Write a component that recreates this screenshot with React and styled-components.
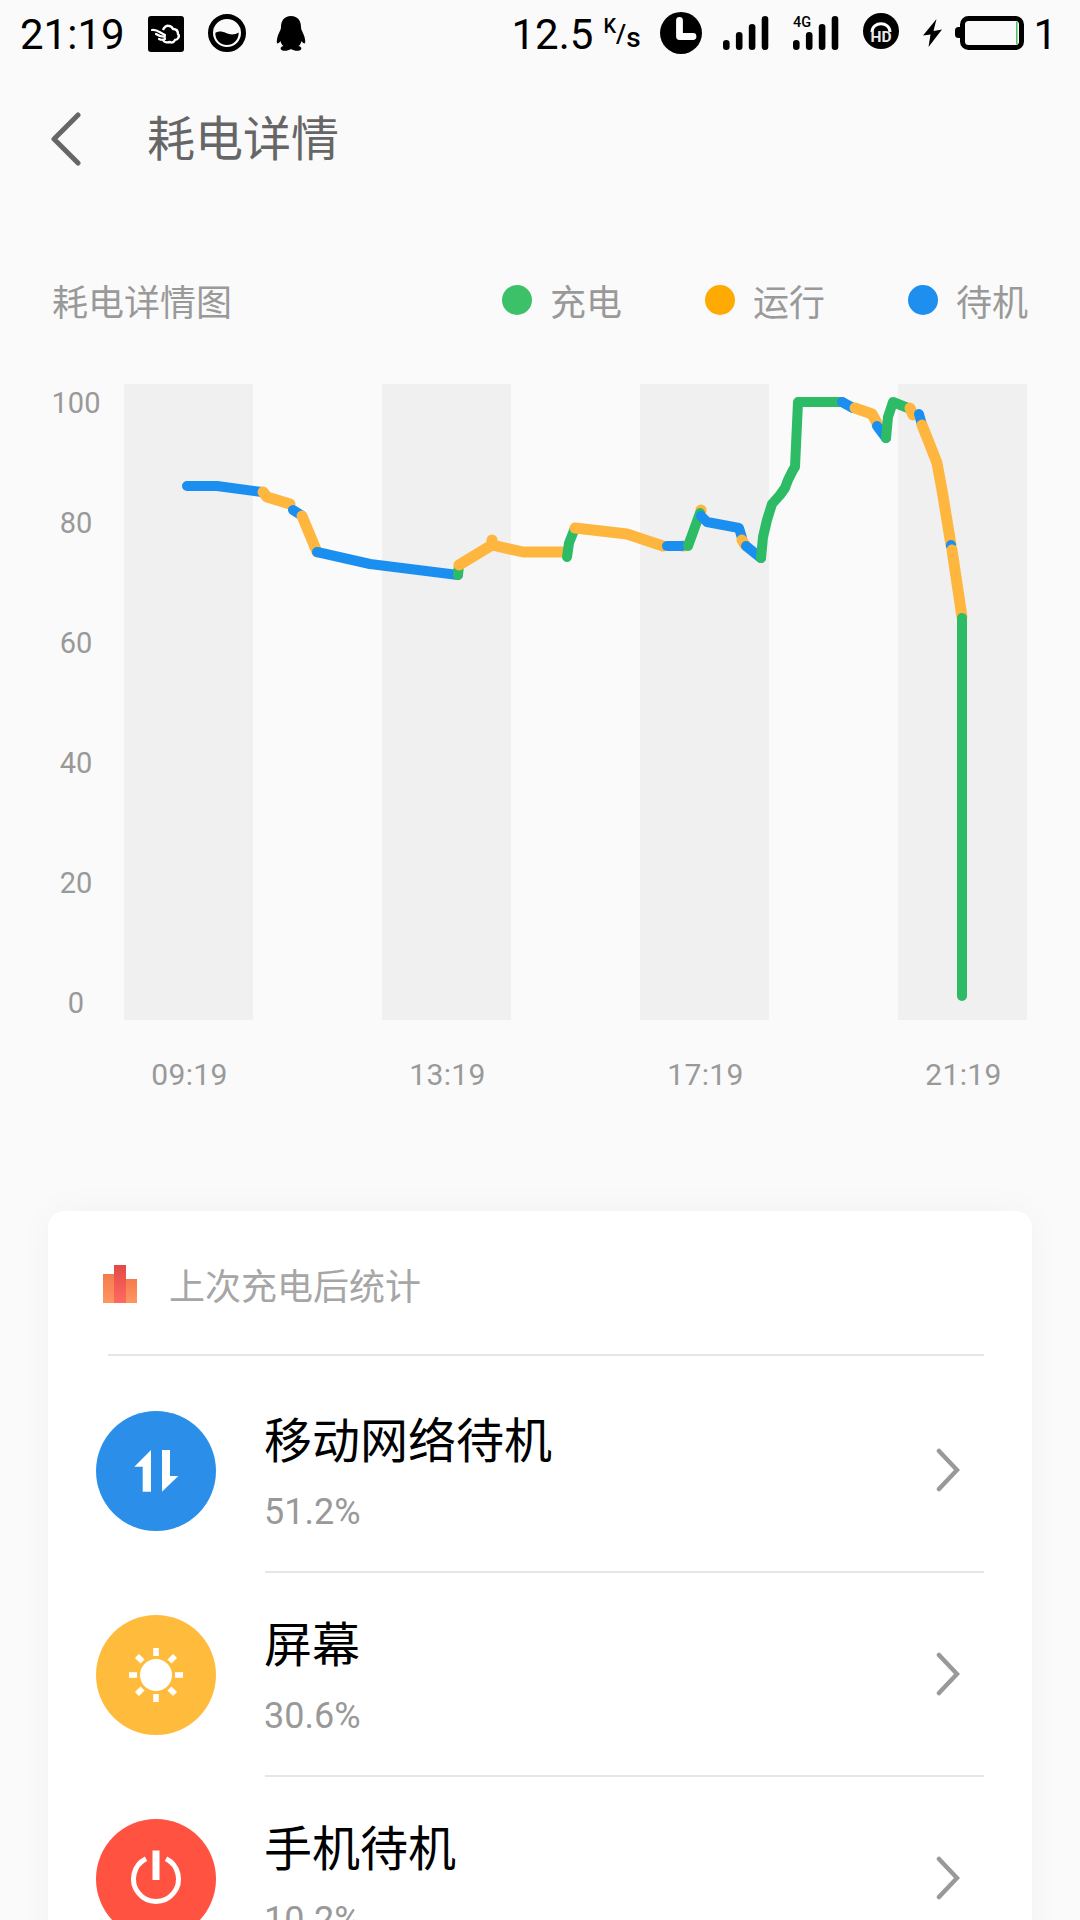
import React from "react";
import styled, { createGlobalStyle } from "styled-components";

const GlobalStyle = createGlobalStyle`
  html, body {
    margin: 0;
    background: #fafafa;
  }
  body {
    font-family: Roboto, "Noto Sans CJK SC", sans-serif;
  }
`;

const Page = styled.div`
  width: 1080px;
  height: 1920px;
  overflow: hidden;
  background: #fafafa;
`;

/* status bar */
const StatusBar = styled.div`
  height: 66px;
  display: flex;
  align-items: center;
  padding: 0 23px 0 20px;
  color: #000;
  box-sizing: border-box;
`;

const StatusText = styled.span`
  font-size: 42px;
  line-height: 60px;
  margin-top: 3px;
  margin-left: ${(p) => p.$gap || 0}px;
`;

const StatusIcon = styled.svg`
  display: block;
  flex: none;
  overflow: visible;
  margin-left: ${(p) => p.$gap || 0}px;
  margin-bottom: ${(p) => p.$lift || 0}px;
`;

const Spacer = styled.div`
  flex: 1;
`;

const SpeedUnit = styled.div`
  display: flex;
  height: 36px;
  width: 39px;
  margin: 2px 0 0 10px;
`;

const UnitPart = styled.span`
  align-self: ${(p) => p.$align};
  font-weight: ${(p) => p.$weight};
  font-size: ${(p) => p.$size}px;
  line-height: ${(p) => p.$size}px;
`;

/* nav */
const NavBar = styled.div`
  height: 142px;
  margin-top: 2px;
  display: flex;
  align-items: center;
  padding-left: 51px;
`;

const NavTitle = styled.h1`
  margin: 0 0 8px 66px;
  font-size: 48px;
  font-weight: 400;
  color: #666;
`;

/* chart */
const ChartHeader = styled.div`
  display: flex;
  align-items: center;
  height: 60px;
  margin: 60px 52px 52px;
  font-size: 36px;
  color: #999;
`;

const ChartTitle = styled.div`
  flex: 1;
`;

const LegendItem = styled.div`
  display: flex;
  align-items: center;
  gap: 18px;
  margin-left: 83px;
`;

const LegendDot = styled.i`
  width: 30px;
  height: 30px;
  border-radius: 50%;
  background: ${(p) => p.$color};
`;

const ChartRow = styled.div`
  display: flex;
  padding-left: 36px;
`;

const YAxis = styled.div`
  width: 80px;
  height: 640px;
  margin: 1px 8px 0 0;
  display: flex;
  flex-direction: column;
  justify-content: space-between;
  align-items: center;
`;

const AxisLabel = styled.span`
  font-size: 29px;
  line-height: 40px;
  color: #999;
  text-align: center;
`;

const TimeLabel = styled(AxisLabel)`
  font-size: 30px;
  letter-spacing: 0.4px;
`;

const Plot = styled.svg`
  display: block;
  margin-top: 2px;
`;

const XAxis = styled.div`
  display: grid;
  grid-template-columns: repeat(4, 129px);
  column-gap: 129px;
  margin: 32px 0 116px 125px;
`;

/* card */
const Card = styled.section`
  margin: 0 48px;
  height: 800px;
  background: #fff;
  border-radius: 16px;
  box-shadow: 0 0 36px rgba(0, 0, 0, 0.035);
`;

const CardHeader = styled.div`
  display: flex;
  align-items: center;
  gap: 32px;
  height: 60px;
  padding: 43px 0 40px 55px;
  font-size: 36px;
  color: #a6a6a6;
`;

const HeaderRule = styled.div`
  height: 2px;
  margin: 0 48px 13px 60px;
  background: #e6e6e6;
`;

const Row = styled.div`
  display: flex;
  height: 204px;
  padding-left: 48px;
`;

const Badge = styled.div`
  flex: none;
  width: 120px;
  height: 120px;
  margin: 42px 49px 0 0;
  border-radius: 50%;
  background: ${(p) => p.$color};
`;

const RowBody = styled.div`
  flex: 1;
  display: flex;
  align-items: center;
  height: 204px;
  margin-right: 48px;
  box-sizing: border-box;
  border-bottom: 2px solid #e6e6e6;
`;

const RowText = styled.div`
  flex: 1;
  margin: 6px 0 0 -1px;
`;

const RowTitle = styled.div`
  font-size: 48px;
  line-height: 60px;
  color: #000;
`;

const RowValue = styled.div`
  margin-top: 18px;
  font-size: 36px;
  line-height: 44px;
  color: #999;
`;

const Chevron = styled.svg`
  display: block;
  flex: none;
  margin-right: 24px;
`;

const BLUE = "#1a8ff0";
const ORANGE = "#ffb63e";
const GREEN = "#2dbb66";

const lineWidth = { [BLUE]: 10, [ORANGE]: 11, [GREEN]: 10 };

// page coordinates, the plot's viewBox starts at the first band
const segments = [
  [BLUE, "187,486 217,486 262,492"],
  [ORANGE, "263,492 267,497 290,504"],
  [BLUE, "293,510 301,515"],
  [ORANGE, "302,516 317,552"],
  [BLUE, "317,552 370,564 458,575"],
  [GREEN, "458,575 459,565"],
  [ORANGE, "492,540 492,545"],
  [ORANGE, "459,565 492,545 523,552 565,552"],
  [GREEN, "567,557 569,543 575,528"],
  [ORANGE, "575,528 627,534 663,546"],
  [ORANGE, "683,546 684,546"],
  [BLUE, "667,546 682,546"],
  [ORANGE, "701,510 701,511"],
  [GREEN, "688,546 700,513"],
  [BLUE, "701,516 707,522 739,528 742,538"],
  [ORANGE, "742,540 745,545"],
  [BLUE, "746,546 761,558"],
  [GREEN, "761,558 763,537 767,520 772,504 780,495 785,488 788,480 793,470 795,467 798,402 842,402"],
  [BLUE, "842,402 853,408"],
  [ORANGE, "855,408 872,414 878,425"],
  [BLUE, "877,426 886,438"],
  [GREEN, "886,438 888,417 893,402 908,408"],
  [ORANGE, "910,408 913,415"],
  [BLUE, "919,414 922,425"],
  [ORANGE, "922,425 928,440 937,463 942,490 951,545"],
  [BLUE, "951,545 951,546"],
  [ORANGE, "952,550 962,617"],
  [GREEN, "962,618 962,996"],
];

const bands = [124, 382, 640, 898];
const yLabels = ["100", "80", "60", "40", "20", "0"];
const xLabels = ["09:19", "13:19", "17:19", "21:19"];
const legend = [
  ["充电", "#3cc169"],
  ["运行", "#ffaa00"],
  ["待机", "#1e8fef"],
];

function NetworkIcon() {
  return (
    <svg width="120" height="120" viewBox="0 0 120 120">
      <path d="M55 39 38.3 55.7h8.4v25H55zM66 39h8v26h8.3L66 80.7z" fill="#fff" />
    </svg>
  );
}

function SunIcon() {
  const rays = [0, 45, 90, 135, 180, 225, 270, 315];
  return (
    <svg width="120" height="120" viewBox="0 0 120 120">
      <circle cx="60" cy="60" r="16" fill="#fff" />
      {rays.map((a) => (
        <rect key={a} x="57.2" y="33" width="5.6" height="8" fill="#fff" transform={`rotate(${a} 60 60)`} />
      ))}
    </svg>
  );
}

function PowerIcon() {
  return (
    <svg width="120" height="120" viewBox="0 0 120 120">
      <path d="M50 39.8A22.5 22.5 0 1 0 70 39.8" fill="none" stroke="#fff" strokeWidth="5" />
      <rect x="56.5" y="31.5" width="7" height="29.5" fill="#fff" />
    </svg>
  );
}

const rows = [
  { title: "移动网络待机", value: "51.2%", color: "#2b8fea", Icon: NetworkIcon },
  { title: "屏幕", value: "30.6%", color: "#ffbc3c", Icon: SunIcon },
  { title: "手机待机", value: "10.2%", color: "#ff5240", Icon: PowerIcon },
];

function Signal({ gap, children }) {
  return (
    <StatusIcon $gap={gap} width="46" height="34" viewBox="0 0 46 34">
      {children}
      {[24, 16, 8, 0].map((top, i) => (
        <rect key={top} x={i * 12.9} y={top} width="6.6" height={34 - top} rx="3.3" fill="#000" />
      ))}
    </StatusIcon>
  );
}

export default function App() {
  return (
    <Page>
      <GlobalStyle />
      <StatusBar>
        <StatusText>21:19</StatusText>
        <StatusIcon $gap={23} $lift={-2} width="36" height="36" viewBox="0 0 36 36">
          <rect width="36" height="36" rx="3" fill="#000" />
          <path
            d="M15 14c1-3 4-5 6-4 2 0 3 1 4 3 3 0 5 2 5 5 2 2 0 6-3 6-1 2-3 3-5 2-3 1-6 0-7-2"
            fill="none"
            stroke="#fff"
            strokeWidth="2.400"
            strokeLinejoin="round"
          />
          <path d="M4 14c5-1 8 3 13 5M8 18c3 2 6 3 9 3M11 23c2 1 4 1 6 0" fill="none" stroke="#fff" strokeWidth="2.200" strokeLinecap="round" />
        </StatusIcon>
        <StatusIcon $gap={24} width="38" height="38" viewBox="0 0 38 38">
          <circle cx="19" cy="19" r="16.500" fill="none" stroke="#000" strokeWidth="5" />
          <path d="M7.300 19c2.700-2 6.700-2 10.700 0s9 2 12.700-.5C30.700 35 7.300 35 7.300 19z" fill="#000" />
        </StatusIcon>
        <StatusIcon $gap={30} width="30" height="35" viewBox="0 0 30 35">
          <path
            d="M15 0C8 0 5 5 5 11c0 3-2 5-3.500 10C.5 25 .5 27 1.500 27.500c1 0 2-1 3-2.500.5 2.500 1.500 4 3 5-2.500.5-3.500 2-2.500 3.500C6.500 35.500 12 35 15 33c3 2 8.500 2.500 10 .5 1-1.500 0-3-2.500-3.500 1.500-1 2.500-2.500 3-5 1 1.500 2 2.500 3 2.500 1-.5 1-2.500 0-6.500C27 16 25 14 25 11c0-6-3-11-10-11z"
            fill="#000"
          />
        </StatusIcon>
        <Spacer />
        <StatusText>12.5</StatusText>
        <SpeedUnit>
          <UnitPart $align="flex-start" $weight={500} $size={20}>K</UnitPart>
          <UnitPart $align="center" $weight={500} $size={26}>/</UnitPart>
          <UnitPart $align="flex-end" $weight={500} $size={28}>s</UnitPart>
        </SpeedUnit>
        <StatusIcon $gap={18} width="42" height="42" viewBox="0 0 42 42">
          <circle cx="21" cy="21" r="21" fill="#000" />
          <path d="M19.500 8.500v16h13.500" fill="none" stroke="#fff" strokeWidth="6.800" strokeLinejoin="round" strokeLinecap="round" />
        </StatusIcon>
        <Signal gap={21} />
        <Signal gap={24}>
          <text x="0" y="11" fontSize="14.500" fontWeight="500" fontFamily="Roboto, sans-serif" fill="#000">4G</text>
        </Signal>
        <StatusIcon $gap={24} $lift={4} width="36" height="36" viewBox="0 0 36 36">
          <circle cx="18" cy="18" r="18" fill="#000" />
          <path d="M9 19C9 8 27 8 27 19" fill="none" stroke="#fff" strokeWidth="3" />
          <text x="18" y="29" textAnchor="middle" fontSize="15.500" fontWeight="700" fontFamily="Roboto, sans-serif" fill="#e8e8e8">HD</text>
        </StatusIcon>
        <StatusIcon $gap={24} width="19" height="28" viewBox="0 0 19 28">
          <path d="M13.500 0 0 16.500l7.500-1L5.500 28 19 10.500l-8.500 1.500z" fill="#000" />
        </StatusIcon>
        <StatusIcon $gap={13} width="69" height="34" viewBox="0 0 69 34">
          <rect x="0" y="11" width="8" height="11" rx="3.500" fill="#000" />
          <rect x="7.500" y="2.500" width="59" height="29" rx="6" fill="#fafafa" stroke="#000" strokeWidth="5" />
          <rect x="61" y="6" width="1.500" height="22" fill="#4cc05a" />
        </StatusIcon>
        <StatusText $gap={9}>1</StatusText>
      </StatusBar>

      <NavBar>
        <svg width="30" height="54" viewBox="0 0 30 54">
          <path d="M27 3 3 27l24 24" fill="none" stroke="#666" strokeWidth="5" strokeLinecap="round" strokeLinejoin="round" />
        </svg>
        <NavTitle>耗电详情</NavTitle>
      </NavBar>

      <ChartHeader>
        <ChartTitle>耗电详情图</ChartTitle>
        {legend.map(([label, color]) => (
          <LegendItem key={label}>
            <LegendDot $color={color} />
            {label}
          </LegendItem>
        ))}
      </ChartHeader>

      <ChartRow>
        <YAxis>
          {yLabels.map((l) => (
            <AxisLabel key={l}>{l}</AxisLabel>
          ))}
        </YAxis>
        <Plot width="903" height="636" viewBox="124 384 903 636">
          {bands.map((x) => (
            <rect key={x} x={x} y="384" width="129" height="636" fill="#f0f0f0" />
          ))}
          {segments.map(([color, points]) => (
            <polyline
              key={points}
              points={points}
              fill="none"
              stroke={color}
              strokeWidth={lineWidth[color]}
              strokeLinecap="round"
              strokeLinejoin="round"
            />
          ))}
        </Plot>
      </ChartRow>
      <XAxis>
        {xLabels.map((l) => (
          <TimeLabel key={l}>{l}</TimeLabel>
        ))}
      </XAxis>

      <Card>
        <CardHeader>
          <svg width="34" height="38" viewBox="0 0 34 38">
            <defs>
              <linearGradient id="sideBar" x1="0" y1="0" x2="0" y2="1">
                <stop offset="0" stopColor="#f47a4e" />
                <stop offset="1" stopColor="#ff9660" />
              </linearGradient>
              <linearGradient id="midBar" x1="0" y1="0" x2="0" y2="1">
                <stop offset="0" stopColor="#e24a48" />
                <stop offset="1" stopColor="#ff6a60" />
              </linearGradient>
            </defs>
            <rect x="0" y="9" width="11" height="29" fill="url(#sideBar)" />
            <rect x="23" y="14" width="11" height="24" fill="url(#sideBar)" />
            <rect x="11" y="0" width="12" height="38" fill="url(#midBar)" />
          </svg>
          上次充电后统计
        </CardHeader>
        <HeaderRule />
        {rows.map(({ title, value, color, Icon }) => (
          <Row key={title}>
            <Badge $color={color}>
              <Icon />
            </Badge>
            <RowBody>
              <RowText>
                <RowTitle>{title}</RowTitle>
                <RowValue>{value}</RowValue>
              </RowText>
              <Chevron width="24" height="44" viewBox="0 0 24 44">
                <path d="M3 3l18 19L3 41" fill="none" stroke="#999" strokeWidth="4.500" strokeLinecap="round" strokeLinejoin="miter" />
              </Chevron>
            </RowBody>
          </Row>
        ))}
      </Card>
    </Page>
  );
}
